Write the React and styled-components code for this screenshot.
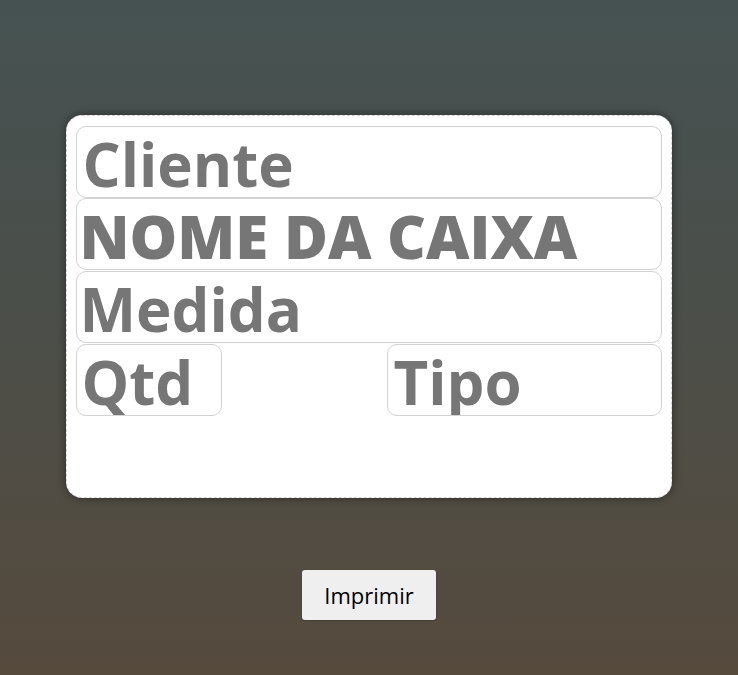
import React from "react";
import styled, { createGlobalStyle } from "styled-components";

const Global = createGlobalStyle`
  html, body { margin: 0; padding: 0; height: 100%; }
  body {
    background: linear-gradient(to bottom, #465252 0%, #4b4f4a 45%, #564a3d 100%);
    font-family: "Open Sans", "Liberation Sans", sans-serif;
  }
  #root { min-height: 675px; }
`;

const Page = styled.div`
  min-height: 675px;
  box-sizing: border-box;
  padding-top: 115px;
  display: flex;
  flex-direction: column;
  align-items: center;
  gap: 72px;
`;

const Card = styled.div`
  box-sizing: border-box;
  width: 606px;
  height: 383px;
  margin-left: -1px;
  background: #fff;
  border: 1px dashed #d4d4d4;
  border-radius: 16px;
  box-shadow: 0 0 10px rgba(0, 0, 0, 0.45);
  padding: 10px 9px;
  display: flex;
  flex-direction: column;
`;

const Field = styled.input`
  box-sizing: border-box;
  display: block;
  width: ${(p) => p.$w || "100%"};
  height: 72px;
  margin: 0;
  padding: 3px 2px 0 ${(p) => p.$pl || 4}px;
  border: 1px solid #d2d2d2;
  border-radius: 10px;
  background: #fff;
  font-family: "Open Sans", "Liberation Sans", sans-serif;
  font-size: 60px;
  font-weight: ${(p) => p.$weight || 700};
  color: #767676;
  outline: none;
  &::placeholder { color: #767676; opacity: 1; }
`;

const Row = styled.div`
  display: flex;
  justify-content: space-between;
  margin-top: 1px;
`;

const Button = styled.button`
  box-sizing: border-box;
  width: 134px;
  height: 50px;
  border: none;
  border-radius: 3px;
  background: #efefef;
  color: #000;
  font-family: "Open Sans", "Liberation Sans", sans-serif;
  font-size: 22px;
  font-weight: 400;
  cursor: pointer;
  box-shadow: 0 1px 2px rgba(0, 0, 0, 0.2);
`;

export default function App() {
  return (
    <>
      <Global />
      <Page>
        <Card>
          <Field placeholder="Cliente" $weight={700} $pl={6} />
          <Field defaultValue="NOME DA CAIXA" $weight={800} $pl={3} />
          <Field placeholder="Medida" $weight={700} $pl={3} style={{ marginTop: 1 }} />
          <Row>
            <Field placeholder="Qtd" $w="146px" $weight={700} $pl={5} />
            <Field placeholder="Tipo" $w="275px" $weight={700} $pl={6} />
          </Row>
        </Card>
        <Button>Imprimir</Button>
      </Page>
    </>
  );
}
